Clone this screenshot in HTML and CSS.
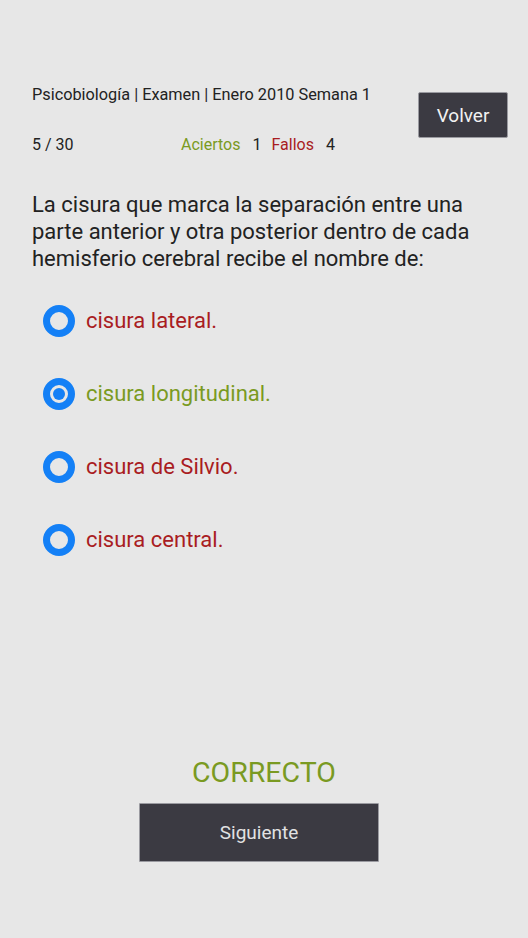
FILE: index.html
```html
<!DOCTYPE html>
<html>
  <head>
    <title>Examen</title>
    <link rel="stylesheet" href="styles.css">
  </head>
  <body>
    <div id="page">
      <div id="header">
        <div id="info">
          <p id="title">Psicobiología | Examen | Enero 2010 Semana 1</p>
          <p id="stats">
            <span id="count">5 / 30</span>
            <span class="ok">Aciertos</span><span class="num">1</span>
            <span class="ko">Fallos</span><span class="num">4</span>
          </p>
        </div>
        <button id="volver">Volver</button>
      </div>

      <p id="question">La cisura que marca la separación entre una parte anterior y otra posterior dentro de cada hemisferio cerebral recibe el nombre de:</p>

      <ul id="options">
        <li><span class="radio"></span><span class="ko">cisura lateral.</span></li>
        <li><span class="radio checked"></span><span class="ok">cisura longitudinal.</span></li>
        <li><span class="radio"></span><span class="ko">cisura de Silvio.</span></li>
        <li><span class="radio"></span><span class="ko">cisura central.</span></li>
      </ul>

      <div id="footer">
        <p id="result">CORRECTO</p>
        <button id="siguiente">Siguiente</button>
      </div>
    </div>
  </body>
</html>
```

FILE: styles.css
```css
html, body { width: 100%; height: 100%; }
body { margin: 0; background-color: #e7e7e7; color: #222; font-family: Roboto, "Liberation Sans", sans-serif; }
p { margin: 0; }
button { font-family: inherit; cursor: pointer; }

#page { display: flex; flex-direction: column; height: 100%; box-sizing: border-box; }

#header { display: flex; justify-content: space-between; padding: 85px 20px 0 32px; }
#title { font-size: 16.3px; line-height: 20px; }
#stats { display: flex; font-size: 16px; line-height: 20px; margin-top: 30px; }
#count { width: 149px; }
#stats .num { margin: 0 10px 0 12px; }
#volver { margin-top: 7px; width: 90px; height: 46px; background: #3b3a42; color: #f2f2f2; font-size: 19px; border: 1px solid #9a9aa0; border-radius: 2px; }

.ok { color: #7a9a22; }
.ko { color: #a91c22; }

#question { font-size: 22px; line-height: 27px; margin: 36px 40px 0 32px; }

#options { list-style-type: none; margin: 12px 0 0 0; padding: 0 0 0 43px; }
#options li { display: flex; align-items: center; height: 73px; font-size: 22px; }
.radio { width: 32px; height: 32px; box-sizing: border-box; border: 7px solid #1480f6; border-radius: 50%; margin-right: 11px; display: flex; align-items: center; justify-content: center; }
.radio.checked::after { content: ""; width: 12px; height: 12px; border-radius: 50%; background: #1480f6; }

#footer { margin-top: auto; padding-bottom: 76px; display: flex; flex-direction: column; align-items: center; }
#result { font-size: 28.5px; line-height: 32px; color: #7a9a22; margin-bottom: 14px; }
#siguiente { width: 240px; height: 59px; margin-right: 10px; background: #3b3a42; color: #e2e2e2; font-size: 19px; border: 1px solid #9a9aa0; border-radius: 1px; }
```
